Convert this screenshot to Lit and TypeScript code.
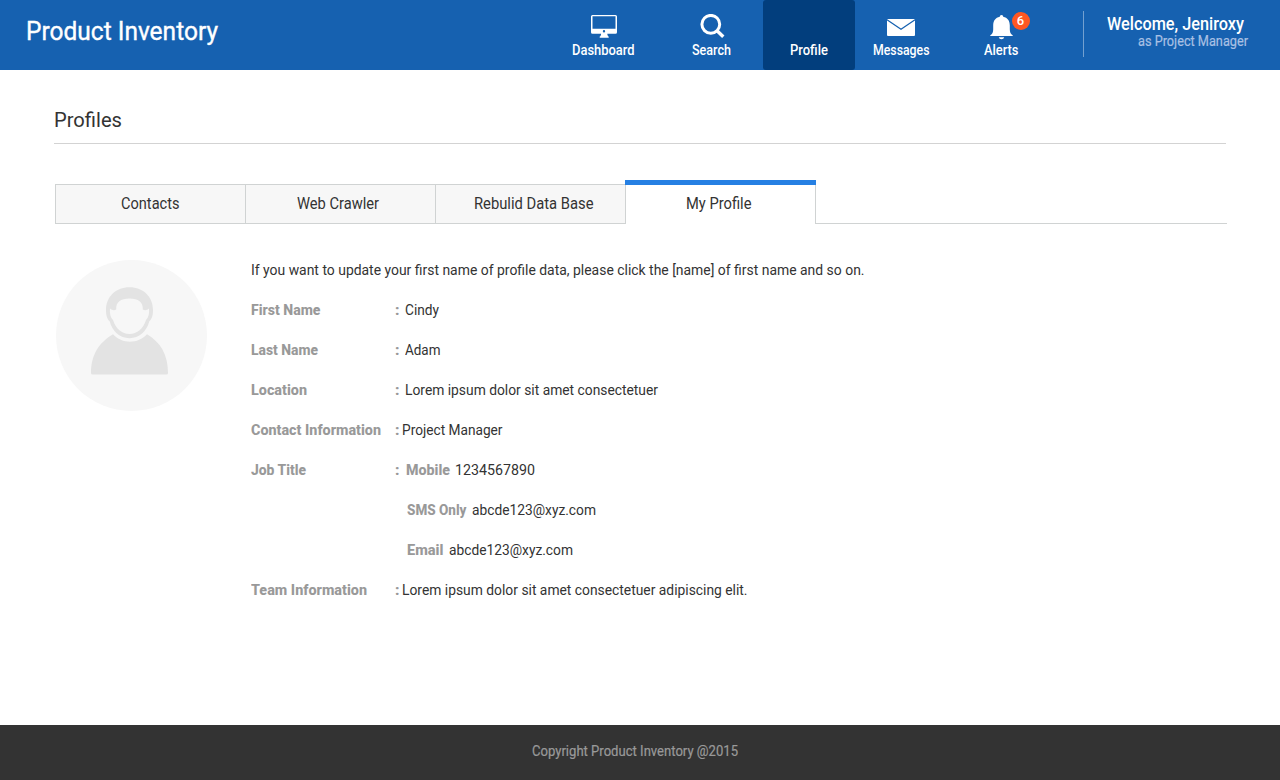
import { LitElement, html, css, svg, nothing } from "lit";
import { customElement, property, query } from "lit/decorators.js";
import { classMap } from "lit/directives/class-map.js";

/** Text condensed or widened horizontally so that it fills a given width. */
@customElement("fit-text")
class FitText extends LitElement {
  static styles = css`
    :host { display: inline-block; white-space: pre; flex: none; text-align: left; }
    .box { display: block; }
    .ink { display: inline-block; transform-origin: 0 50%; }
  `;
  @property() text = "";
  @property({ type: Number }) w = 0;
  @query(".ink") ink!: HTMLElement;

  updated() {
    const natural = this.ink.offsetWidth ? this.ink.getBoundingClientRect().width : 0;
    if (natural && !this.ink.style.transform) {
      this.ink.style.transform = `scaleX(${this.w / natural})`;
    }
  }
  render() {
    return html`<span class="box" style="width:${this.w}px"><span class="ink">${this.text}</span></span>`;
  }
}

const fit = (text: string, w: number) => html`<fit-text .text=${text} .w=${w}></fit-text>`;

const monitorIcon = html`<svg width="26" height="23" viewBox="0 0 26 23">
  <path fill="#fff" fill-rule="evenodd" d="M1.500 0h23A1.500 1.500 0 0 1 26 1.500v15.700a1.500 1.500 0 0 1-1.500 1.500h-8.200c.1 1.600.5 2.300 1.400 2.800v1.300H8.700v-1.300c.9-.5 1.300-1.200 1.400-2.800H1.500A1.500 1.500 0 0 1 0 17.200V1.500A1.500 1.500 0 0 1 1.500 0zM1.500 1.300v12.500h23V1.300zM13 15a1.200 1.200 0 1 0 0 2.400 1.200 1.200 0 0 0 0-2.400z"/>
</svg>`;

const searchIcon = html`<svg width="25" height="25" viewBox="0 0 25 25" fill="none" stroke="#fff">
  <circle cx="10.800" cy="10.300" r="8.900" stroke-width="3"/>
  <path d="M17 16.800l6.300 6" stroke-width="3.400"/>
</svg>`;

const mailIcon = html`<svg width="28" height="17" viewBox="0 0 28 17">
  <rect width="28" height="17" rx="1" fill="#fff"/>
  <path d="M0 .7l14 9.600L28 .7" fill="none" stroke="#1661b0" stroke-width="1.200"/>
</svg>`;

const bellIcon = html`<svg width="24" height="25" viewBox="0 0 24 25" fill="#fff">
  <path d="M12.500 0c1.100 0 1.700.7 1.700 1.800 4.400 1 6.600 4 6.600 8.600v3.800c0 3.200.8 4.800 2.900 6v.9H1.300v-.9c2.100-1.200 2.900-2.800 2.900-6v-3.800c0-4.600 2.200-7.600 6.600-8.600 0-1.100.6-1.800 1.700-1.800z"/>
  <path d="M9.800 22.300h5.400c-.3 1.300-1.300 2-2.700 2s-2.400-.7-2.700-2z"/>
</svg>`;

const avatar = svg`
  <circle cx="75.500" cy="75.500" r="75.500" fill="#f7f7f7"/>
  <path fill="#e3e3e3" fill-rule="evenodd" d="M73.500 27.200C87.500 27.200 97 37 97 50C97 56 95.800 59 93.200 61.500C91 71 83 78.200 73.500 78.200C64 78.200 56 71 53.800 61.500C51.200 59 50 56 50 50C50 37 59.500 27.200 73.500 27.200ZM54 48.500C53.600 53.500 54.200 57 57 60C59.500 68.500 66 74 73.500 74C81 74 87.500 68.500 90 60C92.800 57 93.400 53.500 93 48.500C91 50.500 88.500 50.500 86.800 49.500C87 42 82.500 38.500 73.500 38.500C64.500 38.500 60 42 60.200 49.500C58.500 50.500 56 50.500 54 48.500Z"/>
  <path fill="#e3e3e3" d="M57 74.300C66 84.200 82 84.200 91 74.300C104 82 112 94 112 113Q112 114.600 110.400 114.600H36.600Q35 114.600 35 113C35 94 44 82 57 74.300Z"/>`;

const navItems = [
  { name: "Dashboard", w: 62.500, icon: monitorIcon, kind: "monitor" },
  { name: "Search", w: 39, icon: searchIcon, kind: "search" },
  { name: "Profile", w: 38, icon: nothing, kind: "person", active: true },
  { name: "Messages", w: 56.500, icon: mailIcon, kind: "mail" },
  { name: "Alerts", w: 34.500, icon: bellIcon, kind: "bell", badge: "6" },
];

const tabs = [
  { name: "Contacts", w: 58.500, kind: "contacts" },
  { name: "Web Crawler", w: 82, kind: "crawler" },
  { name: "Rebulid Data Base", w: 119.500, kind: "rebuild" },
  { name: "My Profile", w: 65.500, kind: "mine", active: true },
];

type Row = { label?: [string, number]; sub?: [string, number]; value: [string, number]; pad: string };
const rows: Row[] = [
  { label: ["First Name", 69.500], value: ["Cindy", 34], pad: "wide" },
  { label: ["Last Name", 67], value: ["Adam", 35.500], pad: "wide" },
  { label: ["Location", 56], value: ["Lorem ipsum dolor sit amet consectetuer", 253], pad: "wide" },
  { label: ["Contact Information", 130], value: ["Project Manager", 100.500], pad: "tight" },
  { label: ["Job Title", 55], sub: ["Mobile", 44], value: ["1234567890", 80], pad: "wide" },
  { sub: ["SMS Only", 59.500], value: ["abcde123@xyz.com", 124], pad: "indent" },
  { sub: ["Email", 36.500], value: ["abcde123@xyz.com", 124], pad: "indent" },
  { label: ["Team Information", 116], value: ["Lorem ipsum dolor sit amet consectetuer adipiscing elit.", 345.500], pad: "tight" },
];

@customElement("app-root")
class AppRoot extends LitElement {
  static styles = css`
    :host {
      display: flex; flex-direction: column; height: 780px; width: 1280px;
      box-sizing: border-box; overflow: hidden; background: #fff; color: #333;
      font-family: Roboto, "Open Sans", sans-serif;
    }
    * { box-sizing: border-box; }
    svg { display: block; }

    header { height: 70px; background: #1661b0; color: #fff; display: flex; flex: none; }
    .brand { width: 547px; padding: 11px 0 0 25.5px; font-size: 25px; line-height: 41px; -webkit-text-stroke: 0.35px #fff; }
    nav { display: grid; grid-template-columns: 113px 103px 92px 92px 108px; }
    .item { display: flex; flex-direction: column; align-items: center; border-radius: 3px; font-size: 14px; font-weight: 500; line-height: 20px; }
    .item.active { background: #023e7d; }
    .glyph { height: 40px; position: relative; }
    .monitor { padding-right: 1px; }
    .monitor .glyph { padding: 15px 0 0 2px; }
    .search .glyph { padding: 14px 0 0 2px; }
    .person { padding-right: 1px; }
    .mail .glyph { padding-top: 19px; }
    .bell .glyph { padding-top: 15px; }
    .badge { position: absolute; left: 23px; top: 12px; width: 18px; height: 18px; padding-right: 1px; border-radius: 50%; background: #ff5722; font-size: 13px; line-height: 18px; text-align: center; }
    .user { margin: 11px 0 0 28px; padding: 3px 0 0 23px; width: 165px; height: 46px; border-left: 1px solid #73a0d0; display: flex; flex-direction: column; }
    .hello { font-size: 17.5px; font-weight: 500; line-height: 21px; height: 18px; }
    .role { font-size: 14px; line-height: 18px; color: #a9c0e4; padding-left: 30.5px; -webkit-text-stroke: 0.2px #a9c0e4; }

    main { flex: 1; padding: 0 53px 0 54px; }
    h1 { margin: 0; width: 1172px; height: 74px; padding-top: 37px; font-size: 21px; font-weight: 400; line-height: 26px; border-bottom: 1px solid #d3d3d3; }
    .tabs { display: flex; margin: 36px 0 0 1px; height: 44px; align-items: flex-end; }
    .tab { width: 190px; height: 40px; border: 1px solid #d0d3d3; border-right: 0; background: #f7f7f7; display: flex; justify-content: center; font-size: 17px; line-height: 37px; padding-right: 1px; }
    .tab.crawler { padding-right: 5px; }
    .tab.rebuild { padding: 0 0 0 6px; }
    .tab.active { width: 191px; height: 44px; border: 0; border-top: 5px solid #2680e3; border-right: 1px solid #d0d3d3; position: relative; background: #fff; line-height: 37px; padding-right: 3px; }
    .tab.active::before { content: ""; position: absolute; left: 0; top: 0; bottom: 0; width: 1px; background: #d0d3d3; }
    .tab.active::after { content: ""; position: absolute; right: -1px; top: -5px; width: 1px; height: 5px; background: #2680e3; }
    .rest { flex: 1; height: 1px; background: #d0d3d3; }

    .profile { display: flex; padding-left: 2px; margin-top: 26px; }
    .avatar { margin: 10px 43px 0 0; flex: none; }
    .info { font-size: 15.5px; line-height: 40px; padding-left: 1px; }
    .row { display: flex; height: 40px; }
    .label, .colon, .sub { font-weight: 800; color: #999; }
    .label { width: 144px; }
    .wide .colon { width: 10px; }
    .tight .colon { width: 7px; }
    .indent .colon { width: 12px; }
    .sub { padding-right: 5px; }
    .wide .sub { padding-left: 0.5px; }

    footer { flex: none; height: 55px; background: #333; color: #999; padding: 16px 0 0 532px; font-size: 14px; line-height: 20px; -webkit-text-stroke: 0.2px #999; }
  `;

  render() {
    return html`
      <header>
        <div class="brand">${fit("Product Inventory", 192)}</div>
        <nav>
          ${navItems.map((n) => html`
            <div class=${classMap({ item: true, active: !!n.active, [n.kind]: true })}>
              <div class="glyph">${n.icon}${n.badge ? html`<span class="badge">${n.badge}</span>` : nothing}</div>
              ${fit(n.name, n.w)}
            </div>`)}
        </nav>
        <div class="user">
          <div class="hello">${fit("Welcome, Jeniroxy", 137)}</div>
          <div class="role">${fit("as Project Manager", 110)}</div>
        </div>
      </header>
      <main>
        <h1>${fit("Profiles", 68)}</h1>
        <div class="tabs">
          ${tabs.map((t) => html`<div class=${classMap({ tab: true, active: !!t.active, [t.kind]: true })}>${fit(t.name, t.w)}</div>`)}
          <div class="rest"></div>
        </div>
        <section class="profile">
          <svg class="avatar" width="151" height="151" viewBox="0 0 151 151">${avatar}</svg>
          <div class="info">
            <div class="row">${fit("If you want to update your first name of profile data, please click the [name] of first name and so on.", 613.500)}</div>
            ${rows.map((r) => html`
              <div class="row ${r.pad}">
                <div class="label">${r.label ? fit(...r.label) : nothing}</div>
                <div class="colon">${r.label ? fit(":", 4.500) : nothing}</div>
                ${r.sub ? html`<div class="sub">${fit(...r.sub)}</div>` : nothing}
                ${fit(...r.value)}
              </div>`)}
          </div>
        </section>
      </main>
      <footer>${fit("Copyright Product Inventory @2015", 206)}</footer>
    `;
  }
}
